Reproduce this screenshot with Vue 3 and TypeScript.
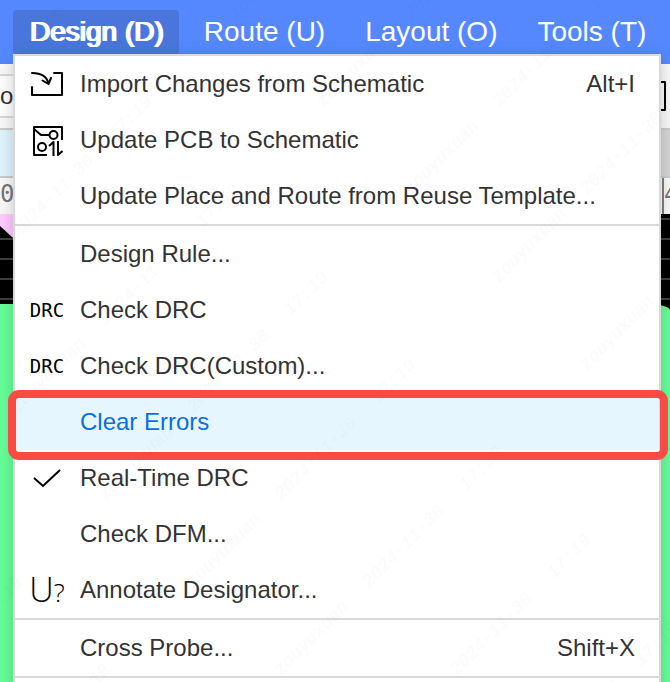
<script setup lang="ts">
type IconName = 'import' | 'update' | 'drc' | 'check' | 'annotate'

interface MenuEntry {
  label: string
  icon?: IconName
  shortcut?: string
  active?: boolean
  checked?: boolean
}

const tabs: string[] = ['Design (D)', 'Route (U)', 'Layout (O)', 'Tools (T)']

const groups: MenuEntry[][] = [
  [
    { label: 'Import Changes from Schematic', icon: 'import', shortcut: 'Alt+I' },
    { label: 'Update PCB to Schematic', icon: 'update' },
    { label: 'Update Place and Route from Reuse Template...' },
  ],
  [
    { label: 'Design Rule...' },
    { label: 'Check DRC', icon: 'drc' },
    { label: 'Check DRC(Custom)...', icon: 'drc' },
    { label: 'Clear Errors', active: true },
    { label: 'Real-Time DRC', icon: 'check', checked: true },
    { label: 'Check DFM...' },
    { label: 'Annotate Designator...', icon: 'annotate' },
  ],
  [{ label: 'Cross Probe...', shortcut: 'Shift+X' }],
]
</script>

<template>
  <div class="app">
    <nav class="menubar">
      <button
        v-for="(tab, i) in tabs"
        :key="tab"
        type="button"
        class="tab"
        :class="{ open: i === 0 }"
      >{{ tab }}</button>
    </nav>

    <div class="workspace">
      <div class="toolbar">
        <div class="field">or</div>
        <svg class="tool" width="20" height="32" viewBox="0 0 20 32">
          <path d="M0 2H17V30H0" fill="none" stroke="#000" stroke-width="2" stroke-linejoin="round" />
        </svg>
      </div>
      <div class="docs"><div class="doc"></div></div>
      <div class="ruler"><span>0</span><span class="mark">4</span></div>
      <div class="canvas">
        <svg class="corner" width="24" height="40" viewBox="0 0 24 40">
          <path d="M0 0H24V34L0 12Z" fill="#ffccff" />
        </svg>
        <div class="board"></div>
      </div>
    </div>

    <div class="menu" role="menu">
      <div v-for="(group, g) in groups" :key="g" class="group">
        <button
          v-for="item in group"
          :key="item.label"
          type="button"
          class="item"
          :class="{ active: item.active }"
          :role="item.checked ? 'menuitemcheckbox' : 'menuitem'"
          :aria-checked="item.checked"
        >
          <span class="icon" aria-hidden="true">
            <svg v-if="item.icon === 'import'" width="34" height="34" viewBox="0 0 34 34">
              <g fill="none" stroke="#000" stroke-width="2" stroke-linecap="round" stroke-linejoin="round">
                <path d="M2 20V28H32V6H24" />
                <path d="M2 6C10 6 17 9 18.500 17M12.500 13.500L18.500 17L21 11" />
              </g>
            </svg>
            <svg v-else-if="item.icon === 'update'" width="34" height="34" viewBox="0 0 34 34">
              <g fill="none" stroke="#000" stroke-width="2" stroke-linejoin="round">
                <path d="M32 17V4H4V32H17" />
                <path d="M4 6L11 12H19" />
                <circle cx="23.500" cy="12" r="4" />
                <circle cx="12" cy="24" r="4" />
                <path d="M19 23L23.500 19V33M28 18V32L32.500 28" />
              </g>
            </svg>
            <span v-else-if="item.icon === 'drc'" class="drc">DRC</span>
            <svg v-else-if="item.icon === 'check'" width="34" height="34" viewBox="0 0 34 34">
              <path d="M4 17L13 25L30 9" fill="none" stroke="#000" stroke-width="2" />
            </svg>
            <span v-else-if="item.icon === 'annotate'" class="annotate">U<small>?</small></span>
          </span>
          <span class="label">{{ item.label }}</span>
          <kbd v-if="item.shortcut">{{ item.shortcut }}</kbd>
        </button>
      </div>
    </div>

    <svg class="watermark" width="100%" height="100%" aria-hidden="true">
      <defs>
        <pattern
          id="stamp"
          width="432"
          height="124"
          patternUnits="userSpaceOnUse"
          patternTransform="translate(229 372) rotate(-45) translate(-216 -62)"
        >
          <text x="86" y="66">zouyuxuan</text>
          <text x="216" y="66">2024-11-30</text>
          <text x="326" y="66">17:19</text>
        </pattern>
      </defs>
      <rect width="100%" height="100%" fill="url(#stamp)" />
    </svg>
  </div>
</template>

<style>
body {
  margin: 0;
}
</style>

<style scoped>
.app {
  position: relative;
  display: flex;
  flex-direction: column;
  min-height: 100vh;
  overflow: hidden;
  font-family: "Liberation Sans", Arial, sans-serif;
  font-size: 24px;
  color: #333;
}

button {
  border: 0;
  background: none;
  font: inherit;
  color: inherit;
  white-space: nowrap;
}

.menubar {
  display: flex;
  gap: 8px;
  padding: 10px 0 10px 13px;
  background: #5588ff;
}

.tab {
  height: 44px;
  padding: 0 15px 0 17px;
  border-radius: 4px;
  font-size: 28px;
  line-height: 44px;
  color: #fff;
}

.tab.open {
  background: #4a76dc;
  text-shadow: 1px 0 #fff, -1px 0 #fff;
}

.workspace {
  flex: 1;
  display: flex;
  flex-direction: column;
}

.toolbar {
  display: flex;
  align-items: center;
  justify-content: space-between;
  height: 64px;
  background: #fafafa;
  border-bottom: 2px solid #ccc;
}

.field {
  width: 60px;
  border: solid #d9d9e3;
  border-width: 2px 0;
  background: #fff;
  line-height: 40px;
}

.tool {
  margin-right: 2px;
}

.docs {
  height: 46px;
  background: #d6d6d6;
  border-bottom: 2px solid #ccc;
}

.doc {
  width: 200px;
  height: 100%;
  background: #e1f5ff;
}

.ruler {
  display: flex;
  justify-content: space-between;
  height: 36px;
  background: #fafafa;
  font-family: "DejaVu Sans Mono", monospace;
  font-size: 24px;
  line-height: 32px;
  color: #777;
}

.mark {
  width: 6px;
  border-left: 2px solid #808080;
  overflow: hidden;
}

.canvas {
  flex: 1;
  display: flex;
  flex-direction: column;
  background: repeating-linear-gradient(#000 0 4px, #404040 4px 6px, #000 6px 20px);
}

.corner {
  display: block;
  margin-bottom: 50px;
}

.board {
  flex: 1;
  background: #66ff99;
  border-top-right-radius: 24px 6px;
}

.menu {
  position: absolute;
  top: 54px;
  right: 9px;
  bottom: -12px;
  left: 13px;
  border: 2px solid #d9d9d9;
  background: #fff;
  box-shadow: 0 4px 16px rgba(0, 0, 0, 0.2);
}

.group {
  border-bottom: 2px solid #d9d9d9;
}

.item {
  position: relative;
  display: flex;
  align-items: center;
  gap: 16px;
  width: 100%;
  height: 56px;
  padding: 0 24px 0 15px;
  text-align: left;
}

.item.active {
  background: #e5f6ff;
  color: #0c6fe0;
}

/* Callout frame around the highlighted command */
.item.active::after {
  content: "";
  position: absolute;
  z-index: 1;
  inset: -4px -9px -10px -7px;
  border: 8px solid #f84b46;
  border-radius: 11px;
}

.icon {
  display: flex;
  justify-content: center;
  align-items: center;
  width: 34px;
  height: 34px;
  color: #000;
}

.drc {
  font-family: "DejaVu Sans Mono", monospace;
  font-size: 19px;
}

.annotate {
  font-family: "Open Sans", sans-serif;
  font-size: 34px;
  font-weight: 300;
  line-height: 34px;
}

.annotate small {
  font-size: 26px;
}

.label {
  flex: 1;
}

kbd {
  font: inherit;
}

.watermark {
  position: absolute;
  inset: 0;
  pointer-events: none;
}

.watermark text {
  font-family: "Liberation Mono", monospace;
  font-size: 18px;
  font-style: italic;
  text-anchor: middle;
  fill: #000;
  fill-opacity: 0.02;
}
</style>
